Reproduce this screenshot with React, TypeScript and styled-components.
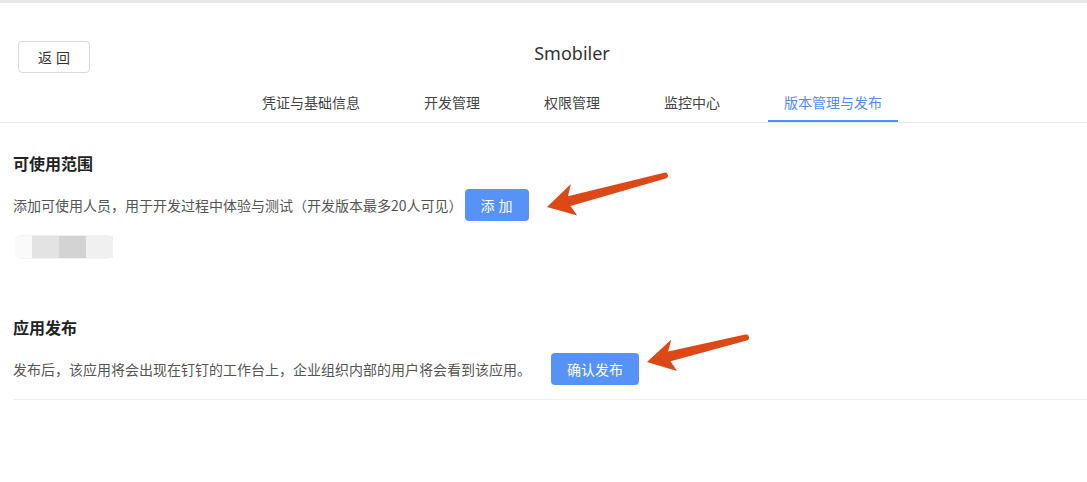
import styled, { createGlobalStyle } from "styled-components";

const GlobalStyle = createGlobalStyle`
  body {
    margin: 0;
    background: #fff;
    font-family: "Noto Sans", "Noto Sans CJK SC", sans-serif;
    color: #333;
  }
`;

const Page = styled.div`
  position: relative;
  width: 1087px;
  height: 482px;
  overflow: hidden;
`;

const TopBar = styled.div`
  height: 3px;
  background: #e8e8e8;
`;

const HeaderRow = styled.div`
  display: flex;
  align-items: flex-start;
  padding: 38px 18px 0;
`;

const BackButton = styled.button`
  width: 72px;
  height: 32px;
  border: 1px solid #d9d9d9;
  border-radius: 4px;
  background: #fff;
  color: #333;
  font-family: "Noto Sans CJK SC", sans-serif;
  font-size: 14px;
  letter-spacing: 4px;
  padding: 0 0 0 4px;
  cursor: pointer;
`;

const Title = styled.h1`
  flex: 1;
  margin: 0;
  padding-right: 15px;
  text-align: center;
  font-size: 18px;
  line-height: 24px;
  font-weight: 400;
  color: #333;
`;

const TabBar = styled.nav`
  display: flex;
  justify-content: center;
  gap: 32px;
  margin-top: 10px;
  padding-left: 57px;
  border-bottom: 1px solid #e8e8e8;
`;

const Tab = styled.div<{ $active?: boolean }>`
  padding: 8px 16px 7px;
  font-family: "Noto Sans CJK SC", sans-serif;
  font-size: 14px;
  line-height: 22px;
  color: ${(p) => (p.$active ? "#4f8ef7" : "#444")};
  border-bottom: 2px solid ${(p) => (p.$active ? "#4f8ef7" : "transparent")};
  cursor: pointer;
`;

const Content = styled.main`
  padding: 28px 0 0 13px;
  font-family: "Noto Sans CJK SC", sans-serif;
`;

const Section = styled.section<{ $divider?: boolean; $gapTop?: number }>`
  margin-top: ${(p) => p.$gapTop ?? 0}px;
  padding-bottom: ${(p) => (p.$divider ? 14 : 0)}px;
  border-bottom: ${(p) => (p.$divider ? "1px solid #eeeeee" : "none")};
`;

const Heading = styled.h2`
  margin: 0;
  font-size: 16px;
  line-height: 24px;
  font-weight: 700;
  color: #222;
`;

const Row = styled.div`
  display: flex;
  align-items: center;
  margin-top: 14px;
`;

const Description = styled.span`
  font-size: 14px;
  line-height: 22px;
  color: #555;
`;

const PrimaryButton = styled.button<{ $gap: number; $spaced?: boolean }>`
  height: 32px;
  margin-left: ${(p) => p.$gap}px;
  padding: ${(p) => (p.$spaced ? "0 12px 0 16px" : "0 16px")};
  border: none;
  border-radius: 4px;
  background: #5793f7;
  color: #fff;
  font-family: "Noto Sans CJK SC", sans-serif;
  font-size: 14px;
  letter-spacing: ${(p) => (p.$spaced ? "4px" : "0")};
  cursor: pointer;
`;

const Member = styled.div`
  display: flex;
  width: 98px;
  height: 22px;
  margin: 15px 0 0 2px;
  filter: blur(0.6px);
  box-shadow: 0 -5px 0 -4px #f3f3f3, 0 5px 0 -4px #f3f3f3;
`;

const Pixel = styled.div<{ $shade: string; $w: number }>`
  width: ${(p) => p.$w}px;
  background: ${(p) => p.$shade};
`;

const Overlay = styled.svg`
  position: absolute;
  inset: 0;
  pointer-events: none;
`;

function Arrow({ x, y, length, angle }: { x: number; y: number; length: number; angle: number }) {
  const d = `M0 0 L29 -16 L23 -5 L${length} -3 A3 3 0 0 1 ${length} 3 L23 5 L27 16 Z`;
  return (
    <g transform={`translate(${x} ${y}) rotate(${angle})`}>
      <path d={d} fill="#dc4816" />
    </g>
  );
}

const tabs = ["凭证与基础信息", "开发管理", "权限管理", "监控中心", "版本管理与发布"];

export default function App() {
  return (
    <Page>
      <GlobalStyle />
      <TopBar />
      <HeaderRow>
        <BackButton>返回</BackButton>
        <Title>Smobiler</Title>
      </HeaderRow>
      <TabBar>
        {tabs.map((t, i) => (
          <Tab key={t} $active={i === tabs.length - 1}>
            {t}
          </Tab>
        ))}
      </TabBar>
      <Content>
        <Section>
          <Heading>可使用范围</Heading>
          <Row>
            <Description>添加可使用人员，用于开发过程中体验与测试（开发版本最多20人可见）</Description>
            <PrimaryButton $gap={2} $spaced>添加</PrimaryButton>
          </Row>
          <Member>
            <Pixel $shade="#fafafa" $w={17} />
            <Pixel $shade="#e3e3e3" $w={27} />
            <Pixel $shade="#d3d3d3" $w={27} />
            <Pixel $shade="#f0f0f0" $w={27} />
          </Member>
        </Section>
        <Section $divider $gapTop={57}>
          <Heading>应用发布</Heading>
          <Row>
            <Description>发布后，该应用将会出现在钉钉的工作台上，企业组织内部的用户将会看到该应用。</Description>
            <PrimaryButton $gap={20}>确认发布</PrimaryButton>
          </Row>
        </Section>
      </Content>
      <Overlay width={1087} height={482}>
        <Arrow x={547} y={207} length={122} angle={-14.9} />
        <Arrow x={647} y={362} length={102} angle={-13.9} />
      </Overlay>
    </Page>
  );
}
